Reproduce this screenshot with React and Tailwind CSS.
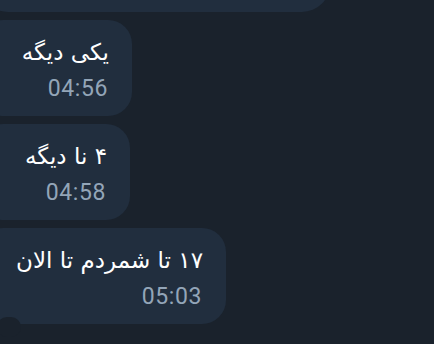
const bubbles = [
  { text: 'یکی دیگه', time: '04:56', width: 'w-[152px]' },
  { text: '۴ نا دیگه', time: '04:58', width: 'w-[150px]' },
  { text: '۱۷ تا شمردم تا الان', time: '05:03', width: 'w-[246px]', tail: true },
];

const Bubble = ({ text, time, width, tail }) => (
  <div
    className={`relative ${width} h-[96px] -ml-[20px] shrink-0 bg-[#212e3e] rounded-[24px] ${tail ? 'rounded-bl-none' : ''} flex flex-col items-end pr-[23px] pt-[18px]`}
  >
    <p
      dir="rtl"
      className="text-white text-[23px] leading-[29px] whitespace-nowrap"
      style={{ fontFamily: '"DejaVu Sans", sans-serif' }}
    >
      {text}
    </p>
    <span
      className="mt-[9px] mr-[1px] text-[#93a5b8] text-[23px] leading-[26px] tracking-[0.6px]"
      style={{ fontFamily: 'Roboto, sans-serif' }}
    >
      {time}
    </span>

    {/* tail notch */}
    {tail && (
      <div className="absolute left-[17px] top-[89px] w-[24px] h-[20px] rounded-full bg-[#1a222c]" />
    )}
  </div>
);

export default function App() {
  return (
    <div className="w-[434px] h-[344px] overflow-hidden bg-[#1a222c] flex flex-col gap-2">
      {/* previous message, cut off at top */}
      <div className="w-[350px] h-[60px] -mt-[48px] -ml-[20px] shrink-0 bg-[#212e3e] rounded-[28px]" />

      {bubbles.map((b) => (
        <Bubble key={b.time} {...b} />
      ))}
    </div>
  );
}
